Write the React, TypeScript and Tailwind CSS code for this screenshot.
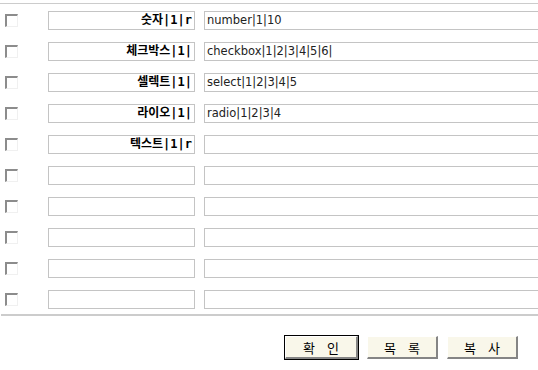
import React from "react";

const rows: { label: string; value: string }[] = [
  { label: "숫자|1|r", value: "number|1|10" },
  { label: "체크박스|1|", value: "checkbox|1|2|3|4|5|6|" },
  { label: "셀렉트|1|", value: "select|1|2|3|4|5" },
  { label: "라이오|1|", value: "radio|1|2|3|4" },
  { label: "텍스트|1|r", value: "" },
  { label: "", value: "" },
  { label: "", value: "" },
  { label: "", value: "" },
  { label: "", value: "" },
  { label: "", value: "" },
];

function Check() {
  return (
    <span className="block w-[13px] h-[13px] bg-white border-t-2 border-l-2 border-t-[#8c8c8c] border-l-[#8c8c8c] border-b border-r border-b-[#f0f0f0] border-r-[#f0f0f0]" />
  );
}

function Btn({ label, primary }: { label: [string, string]; primary?: boolean }) {
  return (
    <button
      className={
        "h-[23px] shrink-0 flex items-center justify-center gap-[12px] bg-[#f9f7ea] text-[13px] text-black leading-none border-t border-l border-t-white border-l-white border-b-2 border-r-2 border-b-[#858585] border-r-[#858585] " +
        (primary ? "w-[73px] outline outline-1 outline-black" : "w-[71px]")
      }
      style={{ fontFamily: '"Noto Sans CJK KR", sans-serif' }}
    >
      <span>{label[0]}</span>
      <span>{label[1]}</span>
    </button>
  );
}

export default function App() {
  return (
    <div className="w-[538px] h-[370px] bg-white overflow-hidden pt-[3px]">
      <div className="h-px bg-[#cccccc]" />
      {rows.map((r, i) => (
        <div key={i} className="h-[31px] flex items-center pt-px">
          <div className="w-[48px] shrink-0 pl-[5px] flex items-center">
            <Check />
          </div>
          <div
            className="w-[147px] shrink-0 h-[19px] border border-[#c4c4c4] text-right pr-[2px] text-[12px] font-bold text-black leading-[17px] whitespace-nowrap"
            style={{ fontFamily: '"DejaVu Sans Mono", "Noto Sans CJK KR", monospace' }}
          >
            {r.label}
          </div>
          <div
            className="ml-[9px] w-[360px] shrink-0 h-[19px] border border-[#c4c4c4] pl-[2px] text-[11.5px] text-[#222] leading-[17px] whitespace-nowrap"
            style={{ fontFamily: '"DejaVu Sans", sans-serif' }}
          >
            {r.value}
          </div>
        </div>
      ))}
      <div className="h-[2px] bg-[#cccccc] ml-px" />
      <div className="flex justify-end gap-[9px] pr-[20px] pt-[20px]">
        <Btn label={["확", "인"]} primary />
        <Btn label={["목", "록"]} />
        <Btn label={["복", "사"]} />
      </div>
    </div>
  );
}
